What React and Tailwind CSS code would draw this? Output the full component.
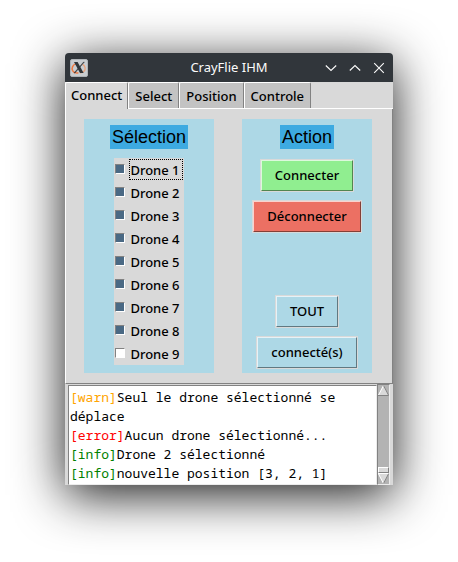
import { useState } from "react";

const tabs = ["Connect", "Select", "Position", "Controle"];
const drones = [1, 2, 3, 4, 5, 6, 7, 8, 9];
const logs = [
  { level: "warn", text: "Seul le drone sélectionné se déplace" },
  { level: "error", text: "Aucun drone sélectionné..." },
  { level: "info", text: "Drone 2 sélectionné" },
  { level: "info", text: "nouvelle position [3, 2, 1]" },
];
const levelColors = {
  warn: "text-[#ffa500]",
  error: "text-[#ff0000]",
  info: "text-[#008000]",
};

function XLogo() {
  return (
    <svg viewBox="0 0 18 18" className="h-[18px] w-[18px]" aria-hidden="true">
      <rect x="0.5" y="0.5" width="17" height="17" rx="1.5" fill="#c9cdd0" stroke="#aeb3b7" />
      <path d="M6 4.6C2.6 6 1.4 9 2.6 11.6C3.6 13.6 6 14.3 8.4 13.8" fill="none" stroke="#ee7a42" strokeWidth="1.5" />
      <path d="M12.6 5.4C15.4 7 15.9 10 14.2 12C13.2 13.2 11.6 13.8 10 13.8" fill="none" stroke="#e9a27c" strokeWidth="1.3" />
      <path d="M4 3H7.6L13.6 14H10Z" fill="#30363a" />
      <path d="M13.6 3H14.4L5 14H4Z" fill="#30363a" stroke="#30363a" strokeWidth="0.4" />
    </svg>
  );
}

function TitleButton({ label, d }) {
  return (
    <button type="button" aria-label={label} className="h-3 w-3">
      <svg viewBox="0 0 12 12" className="block h-3 w-3" fill="none" stroke="#fcfcfc" strokeWidth="1.1">
        <path d={d} />
      </svg>
    </button>
  );
}

function ActionButton({ children, className }) {
  return (
    <button type="button" className={`h-[33px] border border-[#d9d9d9] ${className}`}>
      <span className="flex h-full items-center border border-t-[#ffffffb0] border-l-[#ffffffb0] border-r-[#00000070] border-b-[#00000070] px-[13px] pt-px">
        {children}
      </span>
    </button>
  );
}

function Panel({ title, children }) {
  return (
    <section className="flex flex-1 flex-col items-center bg-[#add8e6] pt-[6px]">
      <h2 className="mb-[9px] bg-[#3daae1] px-[2px] font-['Liberation_Sans',Arial,sans-serif] text-[18px] leading-6 font-normal">
        {title}
      </h2>
      {children}
    </section>
  );
}

function ScrollArrow({ down }) {
  return (
    <svg viewBox="0 0 11 11" className="block h-[11px] w-[11px]" aria-hidden="true">
      {down ? (
        <>
          <path d="M0 0H11L5.5 11Z" fill="#d9d9d9" />
          <path d="M0 0.5H11M0.3 0.5L5.5 10.5" stroke="#fff" fill="none" />
          <path d="M10.7 0.5L5.5 10.5" stroke="#828282" fill="none" />
        </>
      ) : (
        <>
          <path d="M5.5 0L11 11H0Z" fill="#d9d9d9" />
          <path d="M0.3 10.5L5.5 0.5" stroke="#fff" fill="none" />
          <path d="M5.5 0.5L10.7 10.5H0" stroke="#828282" fill="none" />
        </>
      )}
    </svg>
  );
}

export default function App() {
  const [checked, setChecked] = useState([1, 2, 3, 4, 5, 6, 7, 8]);
  const [active, setActive] = useState("Connect");

  const toggle = (n) =>
    setChecked((list) => (list.includes(n) ? list.filter((v) => v !== n) : [...list, n]));

  return (
    <main className="min-h-screen bg-white px-[65px] pt-[53px] font-['Noto_Sans',sans-serif] text-[13px] font-medium text-black">
      <div className="rounded-t-[4px] bg-[#d9d9d9] shadow-[0_10px_50px_rgba(0,0,0,0.9)]">
        <header className="grid h-[29px] grid-cols-[1fr_auto_1fr] items-center rounded-t-[4px] bg-[#31363b] px-[5px] text-[#fcfcfc]">
          <XLogo />
          <h1 className="text-[13px] font-normal">CrayFlie IHM</h1>
          <div className="flex justify-end gap-3 pr-[3px]">
            <TitleButton label="Réduire" d="M0.8 3.5L6 8.5L11.2 3.5" />
            <TitleButton label="Agrandir" d="M0.8 8.5L6 3.5L11.2 8.5" />
            <TitleButton label="Fermer" d="M1.2 1.2L10.8 10.8M10.8 1.2L1.2 10.8" />
          </div>
        </header>

        <nav role="tablist" className="flex h-[27px] shadow-[inset_0_-1px_0_#fff]">
          {tabs.map((tab) => (
            <button
              key={tab}
              type="button"
              role="tab"
              aria-selected={active === tab}
              onClick={() => setActive(tab)}
              className={`rounded-t-[2px] border-t border-r border-l border-t-white border-r-[#828282] border-l-white ${
                active === tab ? "bg-[#d9d9d9] px-[5px]" : "mb-px bg-[#c3c3c3] px-[6px] pt-[2px]"
              }`}
            >
              {tab}
            </button>
          ))}
        </nav>

        <div className="flex gap-7 border-r border-b border-l border-r-[#828282] border-b-[#828282] border-l-white pt-[10px] pr-5 pb-[10px] pl-[18px]">
          <Panel title="Sélection">
            <ul className="mb-2 bg-[#d9d9d9] px-px">
              {drones.map((n) => (
                <li key={n} className="flex h-[23px] items-center">
                  <label className="flex items-center gap-1">
                    <input
                      type="checkbox"
                      checked={checked.includes(n)}
                      onChange={() => toggle(n)}
                      className="mb-px h-[10px] w-[10px] appearance-none border border-t-[#828282] border-r-white border-b-white border-l-[#828282] bg-white checked:bg-[#4a6984]"
                    />
                    <span
                      className={`border border-dotted pt-[2px] pr-[2px] leading-[17px] ${n === 1 ? "border-black" : "border-transparent"}`}
                    >
                      {`Drone ${n}`}
                    </span>
                  </label>
                </li>
              ))}
            </ul>
          </Panel>

          <Panel title="Action">
            <div className="flex flex-1 flex-col items-center gap-2 pt-px pb-1">
              <ActionButton className="bg-[#90ee90]">Connecter</ActionButton>
              <ActionButton className="bg-[#ec7063]">Déconnecter</ActionButton>
              <div className="flex-1" />
              <ActionButton className="bg-[#add8e6]">TOUT</ActionButton>
              <ActionButton className="bg-[#add8e6]">connecté(s)</ActionButton>
            </div>
          </Panel>
        </div>

        <div className="flex pr-[3px] pl-[3px]">
          <div className="mt-px flex-1 border border-t-[#828282] border-r-[#ececec] border-b-[#ececec] border-l-[#828282] bg-white px-px pt-[2px] pb-px font-['Noto_Sans_Mono','DejaVu_Sans_Mono',monospace] leading-[19px] font-normal">
            {logs.map((log, i) => (
              <p key={i}>
                <span className={levelColors[log.level]}>{`[${log.level}]`}</span>
                {log.text}
              </p>
            ))}
          </div>
          <div className="flex w-[13px] flex-col border border-t-[#828282] border-r-[#ececec] border-b-[#ececec] border-l-[#828282] bg-[#b3b3b3]">
            <ScrollArrow />
            <div className="flex-1" />
            <div className="h-[6px] border border-t-white border-r-[#828282] border-b-[#828282] border-l-white bg-[#d9d9d9]" />
            <ScrollArrow down />
          </div>
        </div>
      </div>
    </main>
  );
}
